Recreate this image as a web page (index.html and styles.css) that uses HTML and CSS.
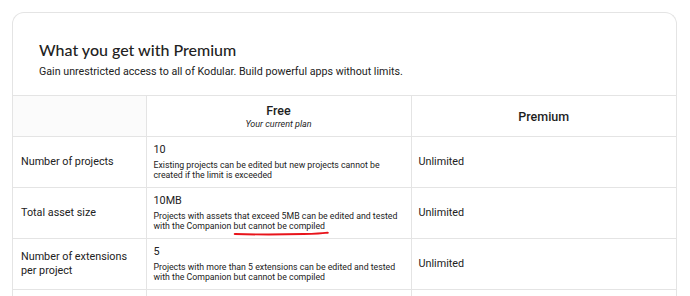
FILE: index.html
```html
<!DOCTYPE html>
<html lang="en">
<head>
<meta charset="utf-8">
<title>Kodular Premium</title>
<link rel="stylesheet" href="styles.css">
</head>
<body>
  <section class="card">
    <header class="card-head">
      <h2 class="title">What you get with Premium</h2>
      <p class="lead">Gain unrestricted access to all of Kodular. Build powerful apps without limits.</p>
    </header>
    <table class="plans">
      <colgroup>
        <col class="col-feature">
        <col class="col-free">
        <col class="col-premium">
      </colgroup>
      <thead>
        <tr>
          <th class="corner"></th>
          <th class="plan">Free<span class="plan-note">Your current plan</span></th>
          <th class="plan plan-premium">Premium</th>
        </tr>
      </thead>
      <tbody>
        <tr>
          <td class="feature">Number of projects</td>
          <td class="free"><span class="value">10</span><span class="detail">Existing projects can be edited but new projects cannot be created if the limit is exceeded</span></td>
          <td class="premium">Unlimited</td>
        </tr>
        <tr>
          <td class="feature">Total asset size</td>
          <td class="free"><span class="value">10MB</span><span class="detail">Projects with assets that exceed 5MB can be edited and tested with the Companion <span class="marked">but cannot be compiled<svg class="scribble" viewBox="0 0 96 8" preserveAspectRatio="none" aria-hidden="true"><path d="M2 5.4 C 20 6, 45 6.2, 70 5.4 S 90 3.8, 94 3.6" fill="none" stroke="#e8141b" stroke-width="2.6" stroke-linecap="round"/></svg></span></span></td>
          <td class="premium">Unlimited</td>
        </tr>
        <tr>
          <td class="feature">Number of extensions per project</td>
          <td class="free"><span class="value">5</span><span class="detail">Projects with more than 5 extensions can be edited and tested with the Companion but cannot be compiled</span></td>
          <td class="premium">Unlimited</td>
        </tr>
        <tr class="spacer">
          <td class="feature"></td>
          <td class="free"></td>
          <td class="premium"></td>
        </tr>
      </tbody>
    </table>
  </section>
</body>
</html>
```
FILE: styles.css
```css
html, body {
  margin: 0;
  background: #ffffff;
}

body {
  padding: 12px 13px 0 12px;
  font-family: Roboto, "Liberation Sans", sans-serif;
  color: #222222;
  height: 296px;
  box-sizing: border-box;
  overflow: hidden;
}

.card {
  border: 1px solid #e4e4e4;
  border-bottom: none;
  border-radius: 12px 12px 0 0;
  overflow: hidden;
}

.card-head {
  padding: 27px 26px 16px 26px;
}

.title {
  margin: 0;
  font-family: Lato, "Noto Sans", sans-serif;
  font-weight: 500;
  font-size: 16px;
  line-height: 20px;
  color: #222222;
}

.lead {
  margin: 5px 0 0 0;
  font-size: 10.7px;
  line-height: 14px;
  color: #222222;
}

.plans {
  width: 100%;
  border-collapse: collapse;
  table-layout: fixed;
}

.col-feature {
  width: 133px;
}

.col-free {
  width: 265px;
}

.plans th,
.plans td {
  border: 1px solid #e4e4e4;
  vertical-align: middle;
  text-align: left;
  padding: 0;
  box-sizing: border-box;
}

.plans tr > :first-child {
  border-left: none;
}

.plans tr > :last-child {
  border-right: none;
}

.corner {
  background: #fbfbfb;
}

.plans thead th {
  height: 41px;
}

.plan {
  text-align: center !important;
  font-size: 12.5px;
  font-weight: 500;
  line-height: 15px;
  color: #1e1e1e;
}

.plan-premium {
  padding-top: 1px !important;
}

.plan-note {
  display: block;
  font-size: 9px;
  font-style: italic;
  font-weight: 400;
  line-height: 11px;
  margin-top: 1px;
}

.plans tbody td {
  height: 51px;
}

.feature {
  padding: 0 8px !important;
  font-size: 10.8px;
  line-height: 14px;
}

.free {
  padding: 4px 6px 5px 7px !important;
}

.value {
  display: block;
  font-size: 10.8px;
  line-height: 14px;
  margin-bottom: 3px;
}

.detail {
  display: block;
  font-size: 8.75px;
  line-height: 10.5px;
}

.marked {
  position: relative;
}

.scribble {
  position: absolute;
  left: -1px;
  bottom: -5px;
  width: calc(100% + 5px);
  height: 6px;
}

.premium {
  padding: 0 7px !important;
  font-size: 10.8px;
  line-height: 14px;
}

.plans tbody .spacer td {
  height: 20px;
}
```
